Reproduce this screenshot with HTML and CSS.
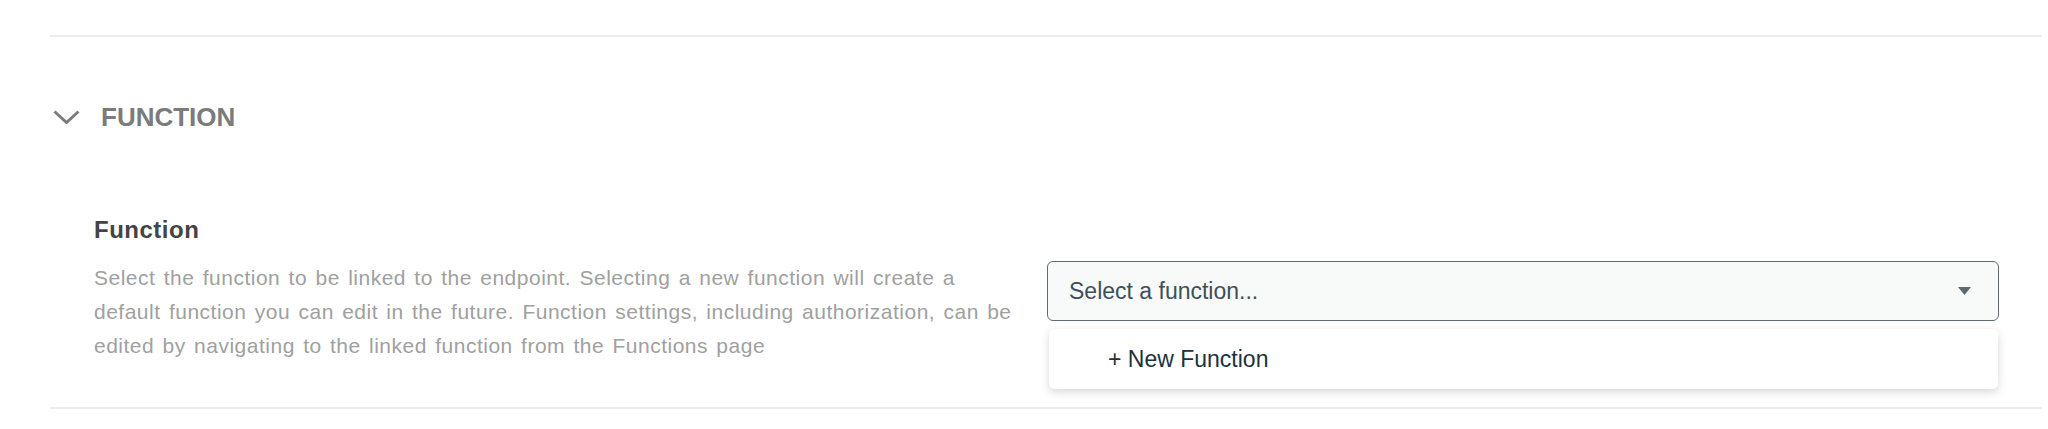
FILE: index.html
```html
<!DOCTYPE html>
<html lang="en">
<head>
<meta charset="utf-8">
<title>Function</title>
<link rel="stylesheet" href="styles.css">
</head>
<body>
<div class="page">
  <div class="divider divider-top"></div>
  <div class="section-header">
    <svg class="chevron" width="27" height="14" viewBox="0 0 27 14" aria-hidden="true">
      <polyline points="1.5,1.5 13.5,12.5 25.5,1.5" fill="none" stroke="#7b7b7b" stroke-width="3" stroke-linejoin="miter"/>
    </svg>
    <span class="section-title">FUNCTION</span>
  </div>
  <div class="field">
    <div class="field-label">Function</div>
    <p class="field-desc">Select the function to be linked to the endpoint. Selecting a new function will create a default function you can edit in the future. Function settings, including authorization, can be edited by navigating to the linked function from the Functions page</p>
    <div class="select-wrap">
      <div class="select">
        <span class="select-text">Select a function...</span>
        <svg class="caret" width="13" height="8" viewBox="0 0 13 8" aria-hidden="true">
          <polygon points="0,0 13,0 6.5,8" fill="#5d6c74"/>
        </svg>
      </div>
      <div class="menu">
        <div class="menu-item">+ New Function</div>
      </div>
    </div>
  </div>
  <div class="divider divider-bottom"></div>
</div>
</body>
</html>
```

FILE: styles.css
```css
html, body {
  margin: 0;
  padding: 0;
  background: #ffffff;
}

body {
  font-family: "Liberation Sans", Arial, sans-serif;
  width: 2048px;
  height: 429px;
  overflow: hidden;
}

.page {
  margin: 0 6px 0 50px;
  padding-top: 35px;
}

.divider {
  height: 2px;
  background: #ebebeb;
}

.section-header {
  margin-top: 65px;
  height: 30px;
  display: flex;
  align-items: center;
  padding-left: 3px;
}

.chevron {
  display: block;
  margin-right: 21px;
}

.section-title {
  font-size: 26px;
  line-height: 30px;
  font-weight: 700;
  color: #7b7b7b;
}

.field {
  margin-top: 84px;
  padding: 0 43px 0 44px;
  display: grid;
  grid-template-columns: 925px 1fr;
  column-gap: 28px;
  row-gap: 17px;
}

.field-label {
  grid-column: 1;
  grid-row: 1;
  font-size: 24px;
  line-height: 28px;
  font-weight: 700;
  color: #444444;
  letter-spacing: 0.5px;
}

.field-desc {
  grid-column: 1;
  grid-row: 2;
  margin: 0;
  font-size: 21px;
  line-height: 34px;
  color: #a0a0a0;
  letter-spacing: 0.5px;
  word-spacing: 2px;
}

.select-wrap {
  grid-column: 2;
  grid-row: 2;
  position: relative;
}

.select {
  box-sizing: border-box;
  height: 60px;
  border: 1.5px solid #5d6c74;
  border-radius: 6px;
  background: #f8f9f9;
  display: flex;
  align-items: center;
  justify-content: space-between;
  padding: 0 27px 0 21px;
}

.select-text {
  font-size: 23px;
  color: #3d4f58;
}

.caret {
  display: block;
}

.menu {
  position: absolute;
  left: 2px;
  right: 1px;
  top: 68px;
  height: 60px;
  background: #ffffff;
  border-radius: 5px;
  box-shadow: 0 3px 8px rgba(0, 0, 0, 0.16);
  display: flex;
  align-items: center;
}

.menu-item {
  padding-left: 59px;
  font-size: 23px;
  color: #21313c;
}

.divider-bottom {
  margin-top: 44px;
}
```
